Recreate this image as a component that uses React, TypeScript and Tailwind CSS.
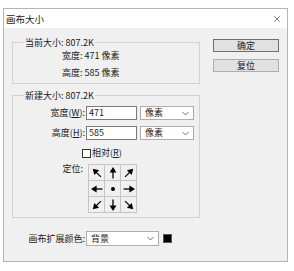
import { X } from 'lucide-react';

function Arrow({ rot }: { rot: number }) {
  return (
    <svg width="12" height="12" viewBox="0 0 12 12">
      <g transform={`rotate(${rot} 6 6)`}>
        <line x1="6" y1="11.5" x2="6" y2="4" stroke="#000" strokeWidth="1.3" />
        <polygon points="6,0 2.6,5.6 9.4,5.6" fill="#000" />
      </g>
    </svg>
  );
}

function Chevron() {
  return (
    <svg width="7" height="5" viewBox="0 0 7 5" className="ml-auto mr-[4px]">
      <polyline points="0.5,1 3.5,4 6.5,1" fill="none" stroke="#777" strokeWidth="1" />
    </svg>
  );
}

const cells: (number | null)[] = [-45, 0, 45, -90, null, 90, -135, 180, 135];

export default function App() {
  return (
    <div className="w-[294px] h-[271px] bg-white pt-[8px] pl-[3px] text-[9px] text-[#1a1a1a] font-['Noto_Sans_CJK_SC',sans-serif]">
      <div className="w-[285px] h-[254px] border border-[#b4b4b4] flex flex-col">
        {/* Title bar */}
        <div className="h-[19px] bg-white flex items-center pl-[2px] pr-[5px]">
          <span className="leading-[12px] text-[9.5px]">画布大小</span>
          <X className="ml-auto w-[10px] h-[10px] text-[#333]" strokeWidth={1.5} />
        </div>

        {/* Body */}
        <div className="flex-1 bg-[#f0f0f0] flex">
          <div className="pl-[8px] pt-[14px] w-[196px]">
            {/* Current size */}
            <div className="relative h-[42px] border border-[#d2d2d2] pl-[49px] pt-[4px]">
              <span className="absolute left-[11px] top-[-7px] px-[1px] bg-[#f0f0f0] leading-[13px]">当前大小: 807.2K</span>
              <div className="h-[17px] flex items-center">宽度: 471 像素</div>
              <div className="h-[17px] flex items-center">高度: 585 像素</div>
            </div>

            {/* New size */}
            <div className="relative mt-[11px] h-[123px] border border-[#d2d2d2] pt-[10px]">
              <span className="absolute left-[11px] top-[-7px] px-[1px] bg-[#f0f0f0] leading-[13px]">新建大小: 807.2K</span>
              <div className="flex items-center h-[14px]">
                <span className="w-[72px] text-right">宽度(<u>W</u>):</span>
                <div className="ml-[1px] w-[51px] h-[14px] border border-[#7a7a7a] bg-white flex items-center pl-[2px]">471</div>
                <div className="ml-[3px] w-[54px] h-[14px] border border-[#adadad] bg-white flex items-center pl-[4px]">
                  像素
                  <Chevron />
                </div>
              </div>
              <div className="flex items-center h-[14px] mt-[6px]">
                <span className="w-[72px] text-right">高度(<u>H</u>):</span>
                <div className="ml-[1px] w-[51px] h-[14px] border border-[#7a7a7a] bg-white flex items-center pl-[2px]">585</div>
                <div className="ml-[3px] w-[54px] h-[14px] border border-[#adadad] bg-white flex items-center pl-[4px]">
                  像素
                  <Chevron />
                </div>
              </div>
              <div className="flex items-center h-[12px] mt-[7px] pl-[69px]">
                <div className="w-[9px] h-[9px] border border-[#333] bg-white" />
                <span className="ml-[1px]">相对(<u>R</u>)</span>
              </div>
              <div className="flex items-start mt-[5px]">
                <span className="w-[75px] text-right leading-[10px] pr-[5px]">定位:</span>
                <div className="grid grid-cols-3 border-l border-t border-[#c4c4c4]">
                  {cells.map((r, i) => (
                    <div key={i} className="w-[16px] h-[16px] border-r border-b border-[#c4c4c4] flex items-center justify-center">
                      {r === null ? <div className="w-[4px] h-[4px] rounded-full bg-black" /> : <Arrow rot={r} />}
                    </div>
                  ))}
                </div>
              </div>
            </div>

            {/* Canvas extension colour */}
            <div className="flex items-center mt-[13px] h-[15px]">
              <span className="w-[73px] text-right">画布扩展颜色:</span>
              <div className="ml-[1px] w-[73px] h-[15px] border border-[#adadad] bg-white flex items-center pl-[4px]">
                背景
                <Chevron />
              </div>
              <div className="ml-[4px] w-[9px] h-[9px] bg-black border border-[#555]" />
            </div>
          </div>

          {/* Buttons */}
          <div className="pl-[13px] pt-[11px] flex flex-col gap-[7px]">
            <div className="w-[66px] h-[13px] border border-[#6f6f6f] bg-[#e1e1e1] flex items-center justify-center leading-[11px]">确定</div>
            <div className="w-[66px] h-[13px] border border-[#adadad] bg-[#e1e1e1] flex items-center justify-center leading-[11px]">复位</div>
          </div>
        </div>
      </div>
    </div>
  );
}
